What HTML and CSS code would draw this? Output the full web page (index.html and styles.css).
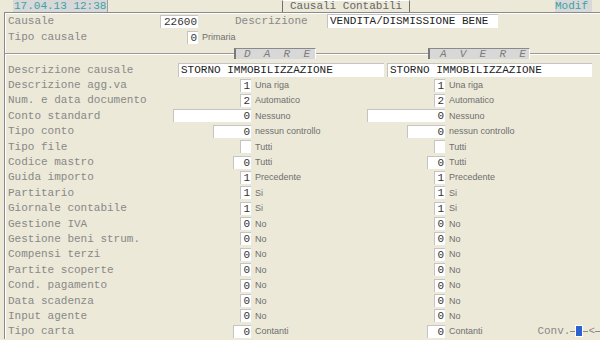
FILE: index.html
```html
<!DOCTYPE html>
<html lang="it">
<head>
  <meta charset="UTF-8" />
  <title>Causali Contabili</title>
  <link rel="stylesheet" href="styles.css">
</head>
<body>

  <header class="titlebar">
    <span class="stamp">17.04.13 12:38</span>
    <span class="title">Causali Contabili</span>
    <span class="mode">Modif</span>
  </header>

  <section class="frame">
    <div class="top-row">
      <span class="label top-label">Causale</span>
      <span class="box-cell top-cell"><span class="field num w-xl">22600</span></span>
      <span class="label desc-label">Descrizione</span>
      <span class="field text w-head">VENDITA/DISMISSIONE BENE</span>
    </div>
    <div class="top-row">
      <span class="label top-label">Tipo causale</span>
      <span class="box-cell top-cell"><span class="field num w-xs">0</span></span>
      <span class="hint">Primaria</span>
    </div>

    <div class="separator">
      <span class="side-tab tab-dare">D  A  R  E</span>
      <span class="side-tab tab-avere">A  V  E  R  E</span>
    </div>

    <div class="grid">
      <span class="label">Descrizione causale</span>
      <span class="wide-cell">
        <span class="field text w-dare">STORNO IMMOBILIZZAZIONE</span>
        <span class="field text w-avere">STORNO IMMOBILIZZAZIONE</span>
      </span>

      <span class="label">Descrizione agg.va</span>
      <span class="box-cell"><span class="field num w-xs">1</span></span>
      <span class="hint">Una riga</span>
      <span class="box-cell"><span class="field num w-xs">1</span></span>
      <span class="hint">Una riga</span>

      <span class="label">Num. e data documento</span>
      <span class="box-cell"><span class="field num w-xs">2</span></span>
      <span class="hint">Automatico</span>
      <span class="box-cell"><span class="field num w-xs">2</span></span>
      <span class="hint">Automatico</span>

      <span class="label">Conto standard</span>
      <span class="box-cell"><span class="field num w-l">0</span></span>
      <span class="hint">Nessuno</span>
      <span class="box-cell"><span class="field num w-l">0</span></span>
      <span class="hint">Nessuno</span>

      <span class="label">Tipo conto</span>
      <span class="box-cell"><span class="field num w-m">0</span></span>
      <span class="hint">nessun controllo</span>
      <span class="box-cell"><span class="field num w-m">0</span></span>
      <span class="hint">nessun controllo</span>

      <span class="label">Tipo file</span>
      <span class="box-cell"><span class="field num w-xs"></span></span>
      <span class="hint">Tutti</span>
      <span class="box-cell"><span class="field num w-xs"></span></span>
      <span class="hint">Tutti</span>

      <span class="label">Codice mastro</span>
      <span class="box-cell"><span class="field num w-s">0</span></span>
      <span class="hint">Tutti</span>
      <span class="box-cell"><span class="field num w-s">0</span></span>
      <span class="hint">Tutti</span>

      <span class="label">Guida importo</span>
      <span class="box-cell"><span class="field num w-xs">1</span></span>
      <span class="hint">Precedente</span>
      <span class="box-cell"><span class="field num w-xs">1</span></span>
      <span class="hint">Precedente</span>

      <span class="label">Partitario</span>
      <span class="box-cell"><span class="field num w-xs">1</span></span>
      <span class="hint">Si</span>
      <span class="box-cell"><span class="field num w-xs">1</span></span>
      <span class="hint">Si</span>

      <span class="label">Giornale contabile</span>
      <span class="box-cell"><span class="field num w-xs">1</span></span>
      <span class="hint">Si</span>
      <span class="box-cell"><span class="field num w-xs">1</span></span>
      <span class="hint">Si</span>

      <span class="label">Gestione IVA</span>
      <span class="box-cell"><span class="field num w-xs">0</span></span>
      <span class="hint">No</span>
      <span class="box-cell"><span class="field num w-xs">0</span></span>
      <span class="hint">No</span>

      <span class="label">Gestione beni strum.</span>
      <span class="box-cell"><span class="field num w-xs">0</span></span>
      <span class="hint">No</span>
      <span class="box-cell"><span class="field num w-xs">0</span></span>
      <span class="hint">No</span>

      <span class="label">Compensi terzi</span>
      <span class="box-cell"><span class="field num w-xs">0</span></span>
      <span class="hint">No</span>
      <span class="box-cell"><span class="field num w-xs">0</span></span>
      <span class="hint">No</span>

      <span class="label">Partite scoperte</span>
      <span class="box-cell"><span class="field num w-xs">0</span></span>
      <span class="hint">No</span>
      <span class="box-cell"><span class="field num w-xs">0</span></span>
      <span class="hint">No</span>

      <span class="label">Cond. pagamento</span>
      <span class="box-cell"><span class="field num w-xs">0</span></span>
      <span class="hint">No</span>
      <span class="box-cell"><span class="field num w-xs">0</span></span>
      <span class="hint">No</span>

      <span class="label">Data scadenza</span>
      <span class="box-cell"><span class="field num w-xs">0</span></span>
      <span class="hint">No</span>
      <span class="box-cell"><span class="field num w-xs">0</span></span>
      <span class="hint">No</span>

      <span class="label">Input agente</span>
      <span class="box-cell"><span class="field num w-xs">0</span></span>
      <span class="hint">No</span>
      <span class="box-cell"><span class="field num w-xs">0</span></span>
      <span class="hint">No</span>

      <span class="label">Tipo carta</span>
      <span class="box-cell"><span class="field num w-s">0</span></span>
      <span class="hint">Contanti</span>
      <span class="box-cell"><span class="field num w-s">0</span></span>
      <span class="hint last-cell">
        <span>Contanti</span>
        <span class="conv">
          <span class="label">Conv.</span>
          <span class="dash"></span>
          <span class="cursor"></span>
          <span class="dash"></span>
          <span class="label">&lt;</span>
          <span class="dash"></span>
        </span>
      </span>
    </div>
  </section>

</body>
</html>
```

FILE: styles.css
```css
body {
  margin: 0;
  width: 600px;
  height: 340px;
  overflow: hidden;
  background: #ece9d8;
  font-family: "Liberation Mono", "DejaVu Sans Mono", monospace;
  font-size: 11px;
  color: #888;
}

.titlebar {
  display: flex;
  height: 12px;
  padding-left: 13px;
  line-height: 12px;
}

.stamp {
  width: 95px;
  padding-left: 1px;
  box-sizing: border-box;
  background: #d8d8d8;
  color: #3aa3a3;
  border-right: 1px solid #a0a0a0;
}

.title {
  width: 128px;
  margin-left: 174px;
  box-sizing: border-box;
  padding-left: 7px;
  background: #ece9d8;
  color: #666;
  border-left: 1px solid #6f6f6f;
  border-right: 1px solid #6f6f6f;
  border-top: 1px solid #fff;
  line-height: 11px;
}

.mode {
  width: 37px;
  margin-left: 145px;
  background: #d8d8d8;
  color: #3aa3a3;
}

.frame {
  margin-left: 4px;
  border-top: 1px solid #8a8a8a;
  border-left: 1px solid #8a8a8a;
  box-shadow: inset 1px 1px 0 #fff;
  padding-left: 3px;
}

.top-row {
  display: flex;
  align-items: center;
  height: 16px;
}

.top-label {
  width: 152px;
}

.top-cell {
  width: 38px;
}

.desc-label {
  width: 92px;
  margin-left: 37px;
}

.label {
  white-space: pre;
  color: #888;
}

.hint {
  font-family: "Liberation Sans", Arial, sans-serif;
  font-size: 9px;
  color: #6f6f6f;
  padding-left: 4px;
  white-space: nowrap;
}

.box-cell {
  display: flex;
  justify-content: flex-end;
}

.field {
  display: block;
  box-sizing: border-box;
  height: 13px;
  line-height: 13px;
  background: #fff;
  color: #333;
  border-top: 1px solid #c4c4c4;
  border-left: 1px solid #c4c4c4;
  white-space: pre;
  overflow: hidden;
}

.field.num {
  text-align: right;
  padding-right: 1px;
}

.field.text {
  height: 14px;
  line-height: 13px;
  padding-left: 2px;
  color: #222;
}

.w-xs { width: 11px; }
.w-s { width: 18px; }
.w-m { width: 38px; }
.w-l { width: 78px; }
.w-xl { width: 38px; padding-right: 2px; }
.w-head { width: 171px; padding-left: 1px; }
.w-dare { width: 206px; }
.w-avere { width: 205px; }

.separator {
  display: flex;
  align-items: center;
  height: 17px;
  margin-left: -3px;
  padding-left: 229px;
  background: linear-gradient(to bottom, transparent 8px, #9a9a9a 8px, #9a9a9a 9px, #fff 9px, #fff 10px, transparent 10px);
}

.side-tab {
  box-sizing: border-box;
  height: 11px;
  line-height: 10px;
  padding-left: 8px;
  background: #d8d8d8;
  border-left: 2px solid #7a7a7a;
  border-top: 1px solid #8a8a8a;
  border-right: 1px solid #fff;
  font-style: italic;
  font-size: 11px;
  color: #7c7c7c;
  white-space: pre;
}

.tab-dare {
  width: 82px;
}

.tab-avere {
  width: 102px;
  margin-left: 112px;
  padding-left: 10px;
}

.grid {
  display: grid;
  grid-template-columns: 157px 86px 106px 88px 1fr;
  grid-auto-rows: 15.4px;
  align-items: center;
}

.wide-cell {
  grid-column: 2 / -1;
  display: flex;
  gap: 3px;
  padding-left: 13px;
}

.last-cell {
  display: flex;
  align-items: center;
  justify-content: space-between;
}

.conv {
  display: flex;
  align-items: center;
  font-family: "Liberation Mono", monospace;
  font-size: 11px;
}

.dash {
  width: 5px;
  height: 1px;
  background: #8a8a8a;
}

.cursor {
  width: 8px;
  height: 12px;
  background: #2c62cf;
  border: 1px solid #fff;
  box-sizing: border-box;
}
```
